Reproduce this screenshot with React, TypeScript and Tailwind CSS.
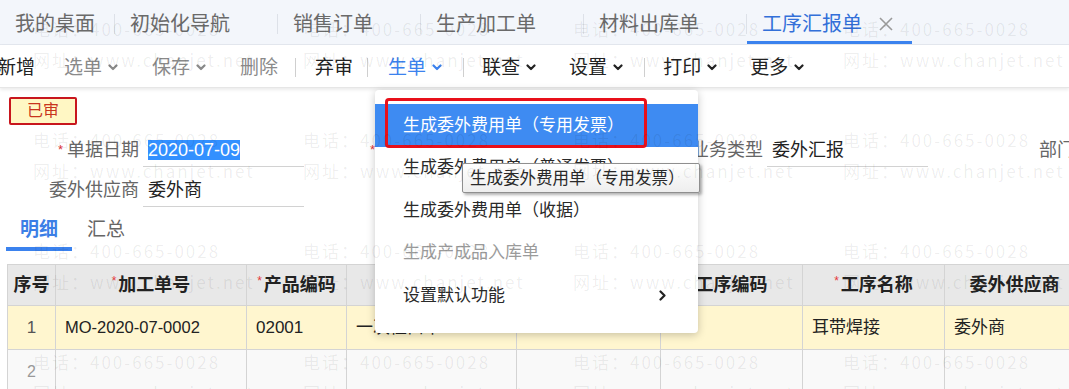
import React from 'react';

const tabs = [
  { label: '我的桌面', home: true },
  { label: '初始化导航' },
  { label: '销售订单' },
  { label: '生产加工单' },
  { label: '材料出库单' },
  { label: '工序汇报单', active: true },
];

type Tool = { label?: string; sep?: boolean; caret?: boolean; tone?: 'dark' | 'off' | 'blue'; ml: string };

const tools: Tool[] = [
  { label: '新增', tone: 'dark', ml: 'ml-[-3px]' },
  { label: '选单', caret: true, tone: 'off', ml: 'ml-[29px]' },
  { label: '保存', caret: true, tone: 'off', ml: 'ml-[34px]' },
  { label: '删除', tone: 'off', ml: 'ml-[34px]' },
  { sep: true, ml: 'ml-[17px]' },
  { label: '弃审', tone: 'dark', ml: 'ml-[19px]' },
  { sep: true, ml: 'ml-[14px]' },
  { label: '生单', caret: true, tone: 'blue', ml: 'ml-[20px]' },
  { sep: true, ml: 'ml-[21px]' },
  { label: '联查', caret: true, tone: 'dark', ml: 'ml-[18px]' },
  { label: '设置', caret: true, tone: 'dark', ml: 'ml-[33px]' },
  { sep: true, ml: 'ml-[21px]' },
  { label: '打印', caret: true, tone: 'dark', ml: 'ml-[18px]' },
  { label: '更多', caret: true, tone: 'dark', ml: 'ml-[33px]' },
];

const toneClass = {
  dark: 'text-[#222]',
  off: 'text-[#8a8a8a]',
  blue: 'text-[#3b82ee]',
};

const columns = [
  { title: '序号', w: 'w-[48px]' },
  { title: '加工单号', req: true, w: 'w-[191px]' },
  { title: '产品编码', req: true, w: 'w-[100px]' },
  { title: '产品名称', w: 'w-[170px]' },
  { title: '规格型号', w: 'w-[144px]' },
  { title: '工序编码', w: 'w-[142px]' },
  { title: '工序名称', req: true, w: 'w-[142px]' },
  { title: '委外供应商', w: 'w-[140px]' },
];

const row1 = ['1', 'MO-2020-07-0002', '02001', '一次性口罩', '', '', '耳带焊接', '委外商'];

const menuItems = [
  { label: '生成委外费用单（专用发票）', active: true },
  { label: '生成委外费用单（普通发票）' },
  { label: '生成委外费用单（收据）' },
  { label: '生成产成品入库单', disabled: true },
  { label: '设置默认功能', sub: true },
];

function Caret({ className }: { className?: string }) {
  return (
    <svg viewBox="0 0 10 7" className={className} fill="none" stroke="currentColor" strokeWidth="2.2" strokeLinecap="round" strokeLinejoin="round">
      <path d="M1.5 1.5l3.5 3.5 3.5-3.5" />
    </svg>
  );
}

function Field({ label, req, children }: { label: string; req?: boolean; children?: React.ReactNode }) {
  return (
    <div className="w-[312px] shrink-0 flex items-start">
      <div className="w-[139px] h-[37px] pt-[10px] leading-[20px] text-right text-[18px] text-[#666]">
        {req && <span className="text-[#e5383b] text-[13px] align-top mr-[4px]">*</span>}
        {label}
      </div>
      <div className="ml-[4px] w-[161px] h-[37px] pt-[10px] pl-[5px] leading-[20px] text-[18px] text-[#222] border-b border-[#d2d2d2] whitespace-nowrap">
        {children}
      </div>
    </div>
  );
}

function Watermark() {
  const tiles = Array.from({ length: 16 });
  return (
    <div className="pointer-events-none absolute inset-0 z-50 overflow-hidden">
      <div className="grid grid-cols-[repeat(4,270px)] pl-[33px] pt-[19px] font-['Noto_Sans_CJK_SC',sans-serif] text-[17px] tracking-[2px] text-black/[0.07]">
        {tiles.map((_, i) => (
          <div key={i} className="h-[111px] flex flex-col gap-[11px] whitespace-nowrap leading-[20px]">
            <span>电话：400-665-0028</span>
            <span>网址：www.chanjet.net</span>
          </div>
        ))}
      </div>
    </div>
  );
}

export default function App() {
  return (
    <div className="relative w-[1069px] h-[389px] overflow-hidden bg-white font-['Liberation_Sans','Noto_Sans_CJK_SC',sans-serif]">
      {/* open documents */}
      <div className="h-[45px] bg-[#f3f6fb] flex items-stretch border-b border-[#e3e7ee]">
        {tabs.map((t, i) => (
          <React.Fragment key={t.label}>
            {i > 0 && <div className="w-px h-[20px] self-center mt-[4px] bg-[#dde1e8]" />}
            <div
              className={`flex items-center pl-[15px] text-[20px] leading-none border-b-[3px] ${
                t.active ? 'text-[#3370d9] border-[#3b82ee]' : 'text-[#6a6a6a] border-transparent'
              } ${t.home ? 'pr-[19px]' : ''}`}
            >
              <span className="pt-[7px]">{t.label}</span>
              {!t.home && (
                <div className={t.active ? 'w-[50px] flex pt-[7px]' : 'w-[47px]'}>
                  {t.active && (
                    <svg viewBox="0 0 14 14" className="ml-[17px] w-[14px] h-[14px] text-[#9a9a9a]" stroke="currentColor" strokeWidth="1.6">
                      <path d="M1 1l12 12M13 1L1 13" />
                    </svg>
                  )}
                </div>
              )}
            </div>
          </React.Fragment>
        ))}
      </div>

      {/* toolbar */}
      <div className="relative h-[43px] pt-[3px] flex items-center bg-white shadow-[0_2px_3px_rgba(0,0,0,0.08)] border-b border-[#e6e6e6]">
        {tools.map((t, i) =>
          t.sep ? (
            <div key={i} className={`${t.ml} w-px h-[19px] bg-[#cfcfcf]`} />
          ) : (
            <div key={i} className={`${t.ml} flex items-center text-[19px] leading-none ${toneClass[t.tone!]}`}>
              <span>{t.label}</span>
              {t.caret && <Caret className="ml-[6px] w-[10px] h-[7px]" />}
            </div>
          )
        )}
      </div>

      {/* document head */}
      <div className="pl-[9px] pt-[9px]">
        <div className="w-[68px] h-[28px] flex items-center justify-center border-2 border-[#c8161d] rounded-[2px] bg-[#fff7c4] text-[16px] text-[#c8341d] leading-none">
          已审
        </div>
      </div>

      <div className="mt-[5px]">
        <div className="h-[40px] flex">
          <Field label="单据日期" req>
            <span className="bg-[#3390ff] text-white">2020-07-09</span>
          </Field>
          <Field label="单据编号" req>
            GXHB-2020-07-0001
          </Field>
          <Field label="业务类型">委外汇报</Field>
          <Field label="部门" />
        </div>
        <div className="h-[40px] flex">
          <Field label="委外供应商">委外商</Field>
        </div>
      </div>

      {/* detail / summary tabs */}
      <div className="ml-[6px] flex h-[41px]">
        <div className="px-[14px] pt-[10px] leading-[20px] text-[19px] font-bold text-[#3b7fe6] border-b-4 border-[#3b82ee]">明细</div>
        <div className="px-[15px] pt-[10px] leading-[20px] text-[19px] text-[#666]">汇总</div>
      </div>

      {/* lines */}
      <div className="mt-[13px] ml-[7px] border-l border-t border-[#d4d4d4] w-max">
        <div className="flex h-[41px] bg-[#e8e8e8]">
          {columns.map((c) => (
            <div key={c.title} className={`${c.w} shrink-0 flex items-center justify-center border-r border-b border-[#d4d4d4] text-[18px] font-bold text-[#222] whitespace-nowrap`}>
              {c.req && <span className="text-[#e5383b] text-[12px] font-normal mr-[2px] -mt-[8px]">*</span>}
              {c.title}
            </div>
          ))}
        </div>
        <div className="flex h-[44px] bg-[#fff6cf]">
          {columns.map((c, i) => (
            <div
              key={c.title}
              className={`${c.w} shrink-0 flex items-center border-r border-b border-[#d4d4d4] text-[#222] whitespace-nowrap ${
                i === 0 ? 'justify-center text-[16px] text-[#555]' : 'pl-[9px]'
              } ${i === 1 ? 'text-[16.5px]' : 'text-[17px]'}`}
            >
              {row1[i]}
            </div>
          ))}
        </div>
        <div className="flex h-[44px] bg-[#f9f9f9]">
          {columns.map((c, i) => (
            <div key={c.title} className={`${c.w} shrink-0 flex items-center justify-center border-r border-b border-[#d4d4d4] text-[16px] text-[#999]`}>
              {i === 0 ? '2' : ''}
            </div>
          ))}
        </div>
      </div>

      {/* 生单 dropdown */}
      <div className="absolute left-[375px] top-[90px] w-[323px] h-[243px] pt-[14px] bg-white rounded-[4px] shadow-[0_2px_8px_rgba(0,0,0,0.22)] z-20">
        {menuItems.map((m) => (
          <div
            key={m.label}
            className={`h-[42.5px] flex items-center pl-[28px] pr-[32px] text-[17px] whitespace-nowrap ${
              m.active ? 'bg-[#3e8bf2] text-white' : m.disabled ? 'text-[#9b9b9b]' : 'text-[#2a2a2a]'
            }`}
          >
            <span className="flex-1">{m.label}</span>
            {m.sub && (
              <svg viewBox="0 0 7 11" className="w-[7px] h-[11px] text-[#222]" fill="none" stroke="currentColor" strokeWidth="2.2" strokeLinecap="round" strokeLinejoin="round">
                <path d="M1.5 1.5l4 4-4 4" />
              </svg>
            )}
          </div>
        ))}
      </div>

      {/* highlight annotation */}
      <div className="absolute left-[385px] top-[98px] w-[262px] h-[50px] border-[3px] border-[#e8101a] rounded-[4px] z-30" />

      {/* tooltip */}
      <div className="absolute left-[462px] top-[163px] w-[238px] h-[30px] flex items-center pl-[7px] border border-[#8f8f8f] rounded-[2px] bg-gradient-to-b from-white to-[#eeeeee] shadow-[2px_2px_3px_rgba(0,0,0,0.3)] text-[16.5px] text-[#2a2a2a] whitespace-nowrap z-30">
        生成委外费用单（专用发票）
      </div>

      <Watermark />
    </div>
  );
}
